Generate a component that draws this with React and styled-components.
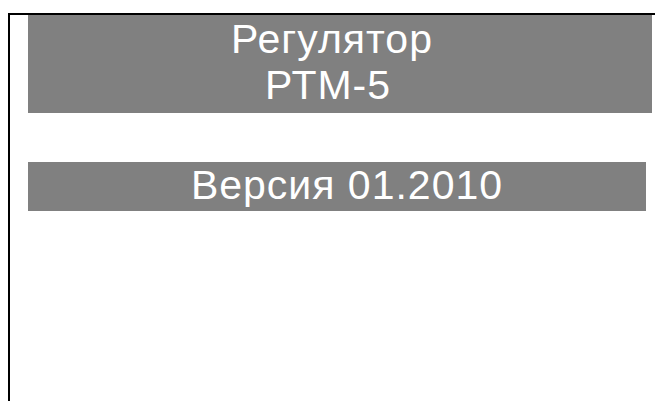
import { createGlobalStyle, styled } from "styled-components";

const GlobalStyle = createGlobalStyle`
  html, body {
    margin: 0;
    padding: 0;
    background: #ffffff;
    overflow: hidden;
  }
  body {
    font-family: "Liberation Sans", Arial, sans-serif;
  }
`;

const Screen = styled.div`
  padding: 13px 0 0 8px;
`;

const Frame = styled.div`
  box-sizing: border-box;
  width: 660px;
  height: 400px;
  border-top: 2px solid #000;
  border-left: 2px solid #000;
  padding-left: 18px;
  display: flex;
  flex-direction: column;
  gap: 49px;
`;

const Banner = styled.div`
  box-sizing: border-box;
  width: ${(p) => p.$width}px;
  height: ${(p) => p.$height}px;
  padding: ${(p) => p.$pad};
  background: #808080;
  color: #ffffff;
  font-size: 41px;
  line-height: 46px;
  letter-spacing: 1px;
  text-align: center;
`;

const Line = styled.div`
  padding-right: ${(p) => p.$shift || 0}px;
`;

const App = () => {
  return (
    <Screen>
      <GlobalStyle />
      <Frame>
        <Banner $width={624} $height={98} $pad="1px 16px 0 0">
          <Line>Регулятор</Line>
          <Line $shift={8}>РТМ-5</Line>
        </Banner>
        <Banner $width={618} $height={49} $pad="0 0 0 20px">
          Версия 01.2010
        </Banner>
      </Frame>
    </Screen>
  );
};

export default App;
